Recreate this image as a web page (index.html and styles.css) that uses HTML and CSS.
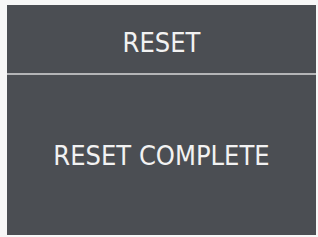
FILE: index.html
```html
<!DOCTYPE html>
<html lang="en">
<head>
    <meta charset="UTF-8">
    <meta name="viewport" content="width=device-width, initial-scale=1.0">
    <title>Reset</title>
    <link rel="stylesheet" href="styles.css">
</head>
<body>

    <div class="panel">
        <div class="panel-header">RESET</div>
        <div class="panel-body">RESET COMPLETE</div>
    </div>

</body>
</html>
```

FILE: styles.css
```css
html, body {
    height: 100%;
}

body {
    margin: 0;
    padding: 5px 2px 2px 7px;
    box-sizing: border-box;
    background-color: #f7f7f7;
    font-family: "DejaVu Sans Condensed", "DejaVu Sans", sans-serif;
}

.panel {
    display: flex;
    flex-direction: column;
    height: 100%;
    background-color: #4b4e53;
    color: #f2f2f2;
}

.panel-header {
    height: 70px;
    display: flex;
    align-items: center;
    justify-content: center;
    padding-top: 6px;
    box-sizing: border-box;
    font-size: 27px;
    border-bottom: 2px solid #b4b5b7;
}

.panel-body {
    flex: 1;
    display: flex;
    align-items: center;
    justify-content: center;
    font-size: 27px;
}
```
